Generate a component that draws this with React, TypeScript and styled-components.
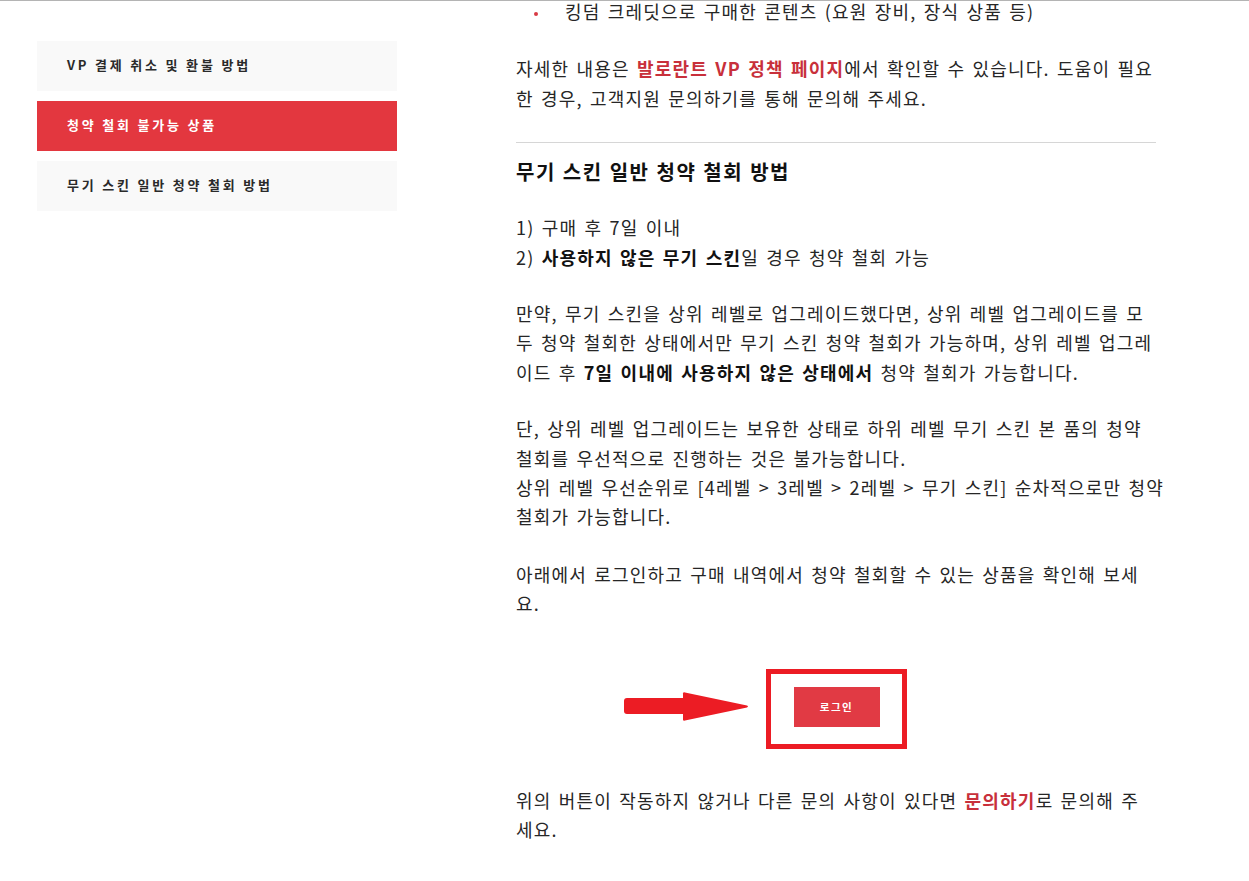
import React from "react";
import styled, { createGlobalStyle } from "styled-components";

const GlobalStyle = createGlobalStyle`
  html, body {
    margin: 0;
    padding: 0;
    background: #ffffff;
  }
  body {
    font-family: "Noto Sans CJK KR", "Noto Sans", "Liberation Sans", sans-serif;
    color: #222222;
  }
`;

const Page = styled.div`
  display: grid;
  grid-template-columns: 360px 640px;
  column-gap: 119px;
  align-items: start;
  padding-left: 37px;
  min-height: 880px;
  border-top: 1px solid #b4b4b4;
  box-sizing: border-box;
`;

const Sidebar = styled.nav`
  display: flex;
  flex-direction: column;
  gap: 10px;
  margin-top: 40px;
`;

const NavItem = styled.a<{ $active?: boolean }>`
  display: flex;
  align-items: center;
  height: 50px;
  padding: 0 30px 4px;
  box-sizing: border-box;
  background: ${(p) => (p.$active ? "#e3373f" : "#f9f9f9")};
  color: ${(p) => (p.$active ? "#ffffff" : "#2a2a2a")};
  font-size: 13px;
  font-weight: 700;
  letter-spacing: 2.8px;
  text-decoration: none;
  cursor: pointer;
`;

const Main = styled.main`
  margin-top: -4px;
  font-size: 18px;
  line-height: 29.4px;
  color: #262626;
  letter-spacing: 1.2px;
  word-spacing: 2px;
`;

const BulletList = styled.ul`
  margin: 0;
  padding: 0;
  list-style: none;
`;

const BulletItem = styled.li`
  position: relative;
  padding-left: 49px;
  &::before {
    content: "";
    position: absolute;
    left: 18px;
    top: 15px;
    width: 4px;
    height: 4px;
    border-radius: 50%;
    background: #d83a44;
  }
`;

const Text = styled.p<{ $gap?: number }>`
  margin: ${(p) => (p.$gap ?? 27)}px 0 0;
  white-space: nowrap;
`;

const RedLink = styled.a`
  color: #c8303b;
  font-weight: 700;
  text-decoration: none;
`;

const Strong = styled.strong`
  font-weight: 700;
  color: #111111;
`;

const Rule = styled.hr`
  margin: 29px 0 0;
  border: 0;
  border-top: 1px solid #d6d6d6;
  height: 0;
`;

const Heading = styled.h3`
  margin: 14px 0 0;
  font-size: 20px;
  line-height: 30px;
  font-weight: 700;
  color: #111111;
  letter-spacing: 1.5px;
  word-spacing: 1px;
`;

const LoginArea = styled.div`
  position: relative;
  display: flex;
  justify-content: center;
  margin-top: 50px;
`;

const Highlight = styled.div`
  width: 141px;
  height: 80px;
  box-sizing: border-box;
  border: 5px solid #ec1c24;
  padding: 13px 22px 17px 23px;
`;

const LoginButton = styled.button`
  display: flex;
  align-items: center;
  justify-content: center;
  width: 86px;
  height: 40px;
  border: 0;
  padding: 0;
  background: #e13a44;
  color: #ffffff;
  font-family: "Noto Sans CJK KR", "Noto Sans", sans-serif;
  font-size: 10.5px;
  font-weight: 700;
  letter-spacing: 1.5px;
  cursor: pointer;
`;

const Arrow = styled.svg`
  position: absolute;
  left: 108px;
  top: 23px;
`;

const navItems = [
  { label: "VP 결제 취소 및 환불 방법", active: false },
  { label: "청약 철회 불가능 상품", active: true },
  { label: "무기 스킨 일반 청약 철회 방법", active: false },
];

export default function App() {
  return (
    <>
      <GlobalStyle />
      <Page>
        <Sidebar>
          {navItems.map((item) => (
            <NavItem key={item.label} $active={item.active}>
              {item.label}
            </NavItem>
          ))}
        </Sidebar>
        <Main>
          <BulletList>
            <BulletItem>킹덤 크레딧으로 구매한 콘텐츠 (요원 장비, 장식 상품 등)</BulletItem>
          </BulletList>
          <Text $gap={28}>
            자세한 내용은 <RedLink>발로란트 VP 정책 페이지</RedLink>에서 확인할 수 있습니다. 도움이 필요
            <br />한 경우, 고객지원 문의하기를 통해 문의해 주세요.
          </Text>
          <Rule />
          <Heading>무기 스킨 일반 청약 철회 방법</Heading>
          <Text $gap={26}>
            1) 구매 후 7일 이내
            <br />
            2) <Strong>사용하지 않은 무기 스킨</Strong>일 경우 청약 철회 가능
          </Text>
          <Text>
            만약, 무기 스킨을 상위 레벨로 업그레이드했다면, 상위 레벨 업그레이드를 모
            <br />두 청약 철회한 상태에서만 무기 스킨 청약 철회가 가능하며, 상위 레벨 업그레
            <br />
            이드 후 <Strong>7일 이내에 사용하지 않은 상태에서</Strong> 청약 철회가 가능합니다.
          </Text>
          <Text>
            단, 상위 레벨 업그레이드는 보유한 상태로 하위 레벨 무기 스킨 본 품의 청약
            <br />
            철회를 우선적으로 진행하는 것은 불가능합니다.
            <br />
            상위 레벨 우선순위로 [4레벨 &gt; 3레벨 &gt; 2레벨 &gt; 무기 스킨] 순차적으로만 청약
            <br />
            철회가 가능합니다.
          </Text>
          <Text $gap={28}>
            아래에서 로그인하고 구매 내역에서 청약 철회할 수 있는 상품을 확인해 보세
            <br />요.
          </Text>
          <LoginArea>
            <Arrow width="126" height="30" viewBox="0 0 126 30" aria-hidden="true">
              <rect x="0" y="6" width="64" height="16" rx="3" fill="#ec1c24" />
              <path d="M59 1.5 Q59 0 61 0.4 L123 13.6 Q125 14.5 123 15.4 L61 28.6 Q59 29 59 27.5 Z" fill="#ec1c24" />
            </Arrow>
            <Highlight>
              <LoginButton>로그인</LoginButton>
            </Highlight>
          </LoginArea>
          <Text $gap={37}>
            위의 버튼이 작동하지 않거나 다른 문의 사항이 있다면 <RedLink>문의하기</RedLink>로 문의해 주
            <br />세요.
          </Text>
        </Main>
      </Page>
    </>
  );
}
